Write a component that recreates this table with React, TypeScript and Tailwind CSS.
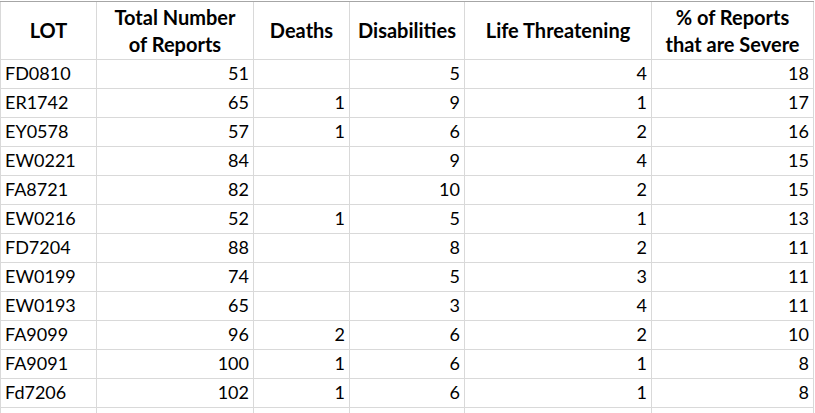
import React from 'react';

type Row = {
  lot: string;
  total: number;
  deaths?: number;
  disabilities: number;
  life: number;
  severe: number;
};

const rows: Row[] = [
  { lot: 'FD0810', total: 51, disabilities: 5, life: 4, severe: 18 },
  { lot: 'ER1742', total: 65, deaths: 1, disabilities: 9, life: 1, severe: 17 },
  { lot: 'EY0578', total: 57, deaths: 1, disabilities: 6, life: 2, severe: 16 },
  { lot: 'EW0221', total: 84, disabilities: 9, life: 4, severe: 15 },
  { lot: 'FA8721', total: 82, disabilities: 10, life: 2, severe: 15 },
  { lot: 'EW0216', total: 52, deaths: 1, disabilities: 5, life: 1, severe: 13 },
  { lot: 'FD7204', total: 88, disabilities: 8, life: 2, severe: 11 },
  { lot: 'EW0199', total: 74, disabilities: 5, life: 3, severe: 11 },
  { lot: 'EW0193', total: 65, disabilities: 3, life: 4, severe: 11 },
  { lot: 'FA9099', total: 96, deaths: 2, disabilities: 6, life: 2, severe: 10 },
  { lot: 'FA9091', total: 100, deaths: 1, disabilities: 6, life: 1, severe: 8 },
  { lot: 'Fd7206', total: 102, deaths: 1, disabilities: 6, life: 1, severe: 8 },
];

const cols = 'grid grid-cols-[96px_157px_96px_115px_187px_162px]';
const cell = 'border-r border-b border-[#d9d9d9] h-[29px] flex items-end pb-[4px] px-[4px] leading-[22px]';
const head = 'border-r border-b border-[#d9d9d9] h-[58px] flex items-center justify-center text-center font-bold text-[20px] leading-[27px] px-1';

export default function App() {
  return (
    <div className="w-[815px] h-[413px] overflow-hidden bg-white text-black font-['Lato',_'Liberation_Sans',_sans-serif]">
      <div className="mt-[1px] border-t border-[#a6a6a6] w-[814px]">
        <div className="border-l border-[#d9d9d9] w-fit">
          {/* header row */}
          <div className={cols}>
            <div className={head}>LOT</div>
            <div className={head}>Total Number<br />of Reports</div>
            <div className={head}>Deaths</div>
            <div className={head}>Disabilities</div>
            <div className={head}>Life Threatening</div>
            <div className={head}>% of Reports<br />that are Severe</div>
          </div>

          {/* data rows */}
          {rows.map((r) => (
            <div key={r.lot} className={`${cols} text-[18px]`}>
              <div className={cell}>{r.lot}</div>
              <div className={`${cell} justify-end`}>{r.total}</div>
              <div className={`${cell} justify-end`}>{r.deaths ?? ''}</div>
              <div className={`${cell} justify-end`}>{r.disabilities}</div>
              <div className={`${cell} justify-end`}>{r.life}</div>
              <div className={`${cell} justify-end`}>{r.severe}</div>
            </div>
          ))}

          {/* partial next row */}
          <div className={cols}>
            <div className={cell} />
            <div className={cell} />
            <div className={cell} />
            <div className={cell} />
            <div className={cell} />
            <div className={cell} />
          </div>
        </div>
      </div>
    </div>
  );
}
